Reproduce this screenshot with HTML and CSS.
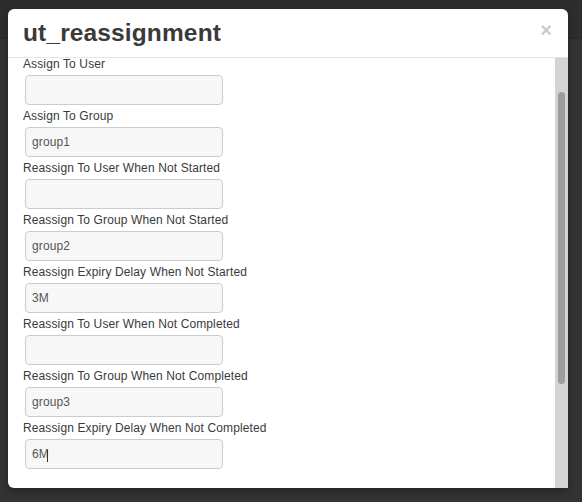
FILE: index.html
```html
<!DOCTYPE html>
<html lang="en">
<head>
<meta charset="utf-8">
<title>ut_reassignment</title>
<link rel="stylesheet" href="styles.css">
</head>
<body>
<div class="topbar"></div>
<div class="modal">
  <div class="modal-header">
    <button class="close" type="button">&times;</button>
    <h3>ut_reassignment</h3>
  </div>
  <div class="modal-body">
    <form class="form">
      <div class="field">
        <label>Assign To User</label>
        <input type="text" value="">
      </div>
      <div class="field">
        <label>Assign To Group</label>
        <input type="text" value="group1">
      </div>
      <div class="field">
        <label>Reassign To User When Not Started</label>
        <input type="text" value="">
      </div>
      <div class="field">
        <label>Reassign To Group When Not Started</label>
        <input type="text" value="group2">
      </div>
      <div class="field">
        <label>Reassign Expiry Delay When Not Started</label>
        <input type="text" value="3M">
      </div>
      <div class="field">
        <label>Reassign To User When Not Completed</label>
        <input type="text" value="">
      </div>
      <div class="field">
        <label>Reassign To Group When Not Completed</label>
        <input type="text" value="group3">
      </div>
      <div class="field">
        <label>Reassign Expiry Delay When Not Completed</label>
        <div class="input-wrap">
          <input type="text" value="6M">
          <span class="caret"></span>
        </div>
      </div>
    </form>
    <div class="scroll-rail"><div class="scroll-thumb"></div></div>
  </div>
</div>
</body>
</html>
```
FILE: styles.css
```css
html, body {
  margin: 0;
  padding: 0;
}
body {
  background: #333333;
  width: 582px;
  height: 502px;
  overflow: hidden;
  font-family: "Liberation Sans", Arial, sans-serif;
  color: #333;
}
.topbar {
  height: 38px;
  background: #2d2d2d;
  border-bottom: 1px solid #292929;
}
.modal {
  position: absolute;
  top: 9px;
  left: 8px;
  width: 560px;
  height: 479px;
  background: #fff;
  border-radius: 6px;
  box-shadow: 0 3px 7px rgba(0, 0, 0, 0.3);
  display: flex;
  flex-direction: column;
}
.modal-header {
  padding: 9px 15px;
  border-bottom: 1px solid #e5e5e5;
}
.modal-header h3 {
  margin: 0;
  font-size: 24.5px;
  line-height: 30px;
  font-weight: bold;
  letter-spacing: 0.13px;
  color: #3a3a3a;
}
.close {
  float: right;
  margin-top: 2px;
  margin-right: 1px;
  padding: 0;
  border: 0;
  background: transparent;
  font-family: "Liberation Sans", Arial, sans-serif;
  font-size: 20px;
  font-weight: bold;
  line-height: 20px;
  color: #000;
  opacity: 0.2;
}
.modal-body {
  flex: 1;
  display: flex;
  min-height: 0;
  border-bottom-left-radius: 6px;
}
.form {
  flex: 1;
  margin: 0;
  padding-left: 15px;
  overflow: hidden;
}
.field label {
  display: block;
  font-size: 12px;
  line-height: 13px;
  letter-spacing: 0.12px;
  color: #3a3a3a;
}
.field input {
  display: block;
  box-sizing: border-box;
  width: 198px;
  height: 30px;
  margin: 4px 0 5px 2px;
  padding: 0 6px;
  border: 1px solid #cccccc;
  border-radius: 4px;
  background: #f7f7f7;
  font-family: "Liberation Sans", Arial, sans-serif;
  font-size: 12px;
  letter-spacing: 0.12px;
  color: #555;
  outline: none;
}
.input-wrap {
  position: relative;
}
.caret {
  position: absolute;
  left: 24px;
  top: 11px;
  width: 1px;
  height: 12px;
  background: #333;
}
.scroll-rail {
  width: 13px;
  background: #d4d4d4;
  flex-shrink: 0;
}
.scroll-thumb {
  width: 7px;
  height: 292px;
  margin: 34px 0 0 3px;
  border-radius: 4px;
  background: #9d9d9d;
}
```
